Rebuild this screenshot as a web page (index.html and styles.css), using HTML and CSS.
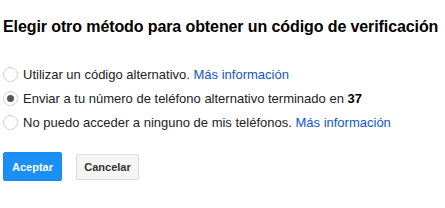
FILE: index.html
```html
<!DOCTYPE html>
<html lang="es">
<head>
  <meta charset="UTF-8" />
  <title>Verificación</title>
  <link rel="stylesheet" href="styles.css">
</head>
<body>
  <h1>Elegir otro método para obtener un código de verificación</h1>

  <div class="options">
    <label class="option">
      <span class="radio"></span>
      <span>Utilizar un código alternativo. <a href="#">Más información</a></span>
    </label>
    <label class="option">
      <span class="radio checked"></span>
      <span>Enviar a tu número de teléfono alternativo terminado en <b>37</b></span>
    </label>
    <label class="option">
      <span class="radio"></span>
      <span>No puedo acceder a ninguno de mis teléfonos. <a href="#">Más información</a></span>
    </label>
  </div>

  <div class="actions">
    <button class="btn primary">Aceptar</button>
    <button class="btn">Cancelar</button>
  </div>
</body>
</html>
```

FILE: styles.css
```css
body {
  font-family: "Liberation Sans", Arial, sans-serif;
  background: #fff;
  margin: 0;
  padding: 0 3px;
  color: #222;
}

h1 {
  font-size: 16px;
  font-weight: bold;
  letter-spacing: -0.1px;
  color: #000;
  margin: 0;
  padding-top: 17px;
  line-height: 20px;
  white-space: nowrap;
}

.options {
  margin-top: 25px;
}

.option {
  display: flex;
  align-items: center;
  gap: 5px;
  height: 24px;
  font-size: 13px;
  color: #222;
}

.option b {
  color: #000;
}

.option a {
  color: #1155cc;
  text-decoration: none;
}

.radio {
  width: 13px;
  height: 13px;
  border: 1px solid #cfcfcf;
  border-radius: 50%;
  background: #fff;
  display: flex;
  align-items: center;
  justify-content: center;
  flex: none;
}

.radio.checked::after {
  content: "";
  width: 7px;
  height: 7px;
  border-radius: 50%;
  background: #555;
}

.actions {
  display: flex;
  align-items: center;
  gap: 14px;
  margin-top: 18px;
}

.btn {
  font-family: inherit;
  font-size: 11px;
  font-weight: bold;
  width: 63px;
  height: 26px;
  padding: 0;
  border: 1px solid #dcdcdc;
  border-radius: 2px;
  background: #f5f5f5;
  color: #333;
}

.btn.primary {
  width: 59px;
  height: 29px;
  background: #1a90f4;
  border-color: #1789ec;
  color: #fff;
}
```
